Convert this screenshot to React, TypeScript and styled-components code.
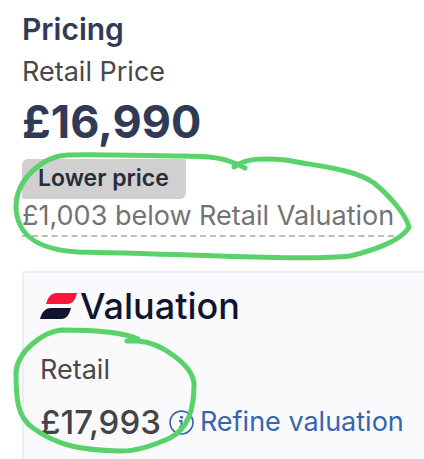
import React from "react";
import styled, { createGlobalStyle } from "styled-components";

const GlobalStyle = createGlobalStyle`
  * { box-sizing: border-box; }
  body {
    margin: 0;
    background: #fff;
    font-family: Inter, "Liberation Sans", sans-serif;
    overflow-x: hidden;
  }
`;

const Page = styled.main`
  position: relative;
  display: flex;
  flex-direction: column;
  min-height: 100vh;
  padding: 10px 0 0 22px;
  overflow: hidden;
`;

const PricingSection = styled.section`
  display: flex;
  flex-direction: column;
  align-items: flex-start;
  white-space: nowrap;
`;

const Heading = styled.h1`
  margin: 0;
  font-size: 30px;
  line-height: 38px;
  font-weight: 600;
  color: #333a56;
`;

const Label = styled.span`
  font-size: 27px;
  line-height: 48px;
  color: #48484b;
`;

const Price = styled.strong`
  font-size: 45px;
  line-height: 52px;
  font-weight: 700;
  color: #303a56;
`;

const Badge = styled.span`
  margin-top: 11px;
  padding: 0 17px 2px 16px;
  border-radius: 6px 2px 6px 2px;
  background: #d1cfd0;
  font-size: 23px;
  line-height: 38px;
  font-weight: 600;
  color: #252c3b;
`;

const Comparison = styled.span`
  padding-bottom: 2px;
  border-bottom: 2px dashed #bdbdbd;
  font-size: 27px;
  line-height: 34px;
  color: #737375;
`;

const Card = styled.section`
  display: flex;
  flex: 1;
  flex-direction: column;
  align-items: flex-start;
  margin-top: 34px;
  padding: 11px 0 12px 16px;
  border: 2px solid #ececf2;
  border-width: 2px 0 0 2px;
  border-radius: 3px 0 0 0;
  background: #fafafc;
  white-space: nowrap;
`;

const Brand = styled.div`
  display: flex;
  align-items: center;
  gap: 3px;
`;

const BrandName = styled.h2`
  margin: 0;
  font-size: 36px;
  line-height: 44px;
  font-weight: 500;
  color: #10142f;
`;

const RetailLabel = styled(Label)`
  margin-top: 18px;
`;

const ValueRow = styled.div`
  display: flex;
  align-items: center;
  gap: 8px;
  margin-top: 4px;
`;

const Value = styled.span`
  font-size: 33px;
  line-height: 48px;
  font-weight: 500;
  color: #444448;
`;

const RefineLink = styled.a`
  display: flex;
  align-items: center;
  gap: 6px;
  font-size: 27px;
  line-height: 32px;
  color: #3566ad;
  text-decoration: none;
`;

const Annotation = styled.svg`
  position: absolute;
  top: 0;
  left: 0;
  pointer-events: none;
  fill: none;
  stroke: #5ad26c;
  stroke-width: 5;
  stroke-linecap: round;
  stroke-linejoin: round;
`;

function BrandMark() {
  return (
    <svg width="37" height="26" viewBox="0 0 37 26" aria-hidden="true">
      <path d="M6 11C8 4 11 0 17 0H37C35 7 33 11 27 11Z" fill="#fb143d" />
      <path d="M0 26C2 19 5 15 11 15H31C29 22 27 26 21 26Z" fill="#10152f" />
    </svg>
  );
}

function InfoIcon() {
  return (
    <svg width="25" height="25" viewBox="0 0 26 26" fill="none" stroke="#3566ad" aria-hidden="true">
      <circle cx="13" cy="13" r="11.9" strokeWidth="1.7" />
      <path d="M10.5 11.5H13V18M10.5 18H16" strokeWidth="2" />
      <circle cx="13" cy="7.5" r="1.6" fill="#3566ad" stroke="none" />
    </svg>
  );
}

export default function App() {
  return (
    <>
      <GlobalStyle />
      <Page>
        <PricingSection>
          <Heading>Pricing</Heading>
          <Label>Retail Price</Label>
          <Price>£16,990</Price>
          <Badge>Lower price</Badge>
          <Comparison>£1,003 below Retail Valuation</Comparison>
        </PricingSection>
        <Card>
          <Brand>
            <BrandMark />
            <BrandName>Valuation</BrandName>
          </Brand>
          <RetailLabel>Retail</RetailLabel>
          <ValueRow>
            <Value>£17,993</Value>
            <RefineLink href="#refine">
              <InfoIcon />
              Refine valuation
            </RefineLink>
          </ValueRow>
        </Card>
        <Annotation width="424" height="459" viewBox="0 0 424 459" aria-hidden="true">
          <path d="M245 168C225 157 209 156 180 156C140 156 105 154 68 155C43 156 16 179 16 207C17 239 43 250 78 252C140 253 180 255 220 256C275 258 325 259 350 256C371 251 402 241 409 227C406 215 391 197 374 183C352 168 315 166 286 160C264 158 245 158 234 167" />
          <path d="M127 341H138C160 342 193 365 194 384C194 408 189 428 170 438C152 446 134 452 119 451C84 450 59 447 33 428C17 417 16 398 16 372C18 350 44 332 61 330C88 330 121 331 138 339" />
        </Annotation>
      </Page>
    </>
  );
}
